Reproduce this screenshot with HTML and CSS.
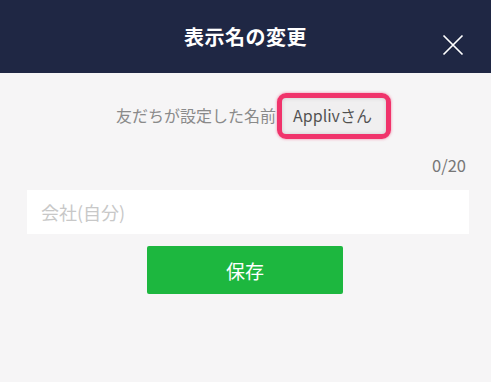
FILE: index.html
```html
<!DOCTYPE html>
<html lang="ja">
<head>
  <meta charset="UTF-8">
  <meta name="viewport" content="width=device-width, initial-scale=1.0">
  <title>表示名の変更</title>
  <link rel="stylesheet" href="styles.css">
</head>
<body>

  <div class="header">
    <div class="title">表示名の変更</div>
    <div class="close">
      <svg width="22" height="22" viewBox="0 0 22 22">
        <path d="M1.5 1.5 L20.5 20.5 M20.5 1.5 L1.5 20.5" stroke="#fff" stroke-width="1.7" fill="none"/>
      </svg>
    </div>
  </div>

  <div class="content">
    <div class="friend-name">友だちが設定した名前<span class="name">Applivさん</span></div>
    <div class="counter">0/20</div>
    <div class="input">会社(自分)</div>
    <button class="save">保存</button>
  </div>

</body>
</html>
```

FILE: styles.css
```css
body {
  margin: 0;
  background-color: #f6f5f6;
  font-family: "Noto Sans CJK JP", "Noto Sans", sans-serif;
}

.header {
  position: relative;
  height: 73px;
  background-color: #1f2744;
  display: flex;
  align-items: center;
  justify-content: center;
}

.title {
  color: #fff;
  font-size: 20px;
  font-weight: bold;
  letter-spacing: 0.5px;
}

.close {
  position: absolute;
  right: 27px;
  top: 34px;
  width: 22px;
  height: 22px;
}

.content {
  padding: 0 22px 0 27px;
}

.friend-name {
  margin-top: 30px;
  text-align: center;
  color: #8a8a8a;
  font-size: 16px;
  line-height: 24px;
  padding-right: 8px;
}

.name {
  position: relative;
  color: #000;
  margin-left: 17px;
}

.name::after {
  content: "";
  position: absolute;
  left: -16px;
  right: -19px;
  top: -10px;
  bottom: -12px;
  border: 5px solid #f0336b;
  border-radius: 9px;
  background: rgba(230, 230, 230, 0.35);
  box-shadow: 0 0 3px rgba(240, 51, 107, 0.6), inset 0 0 4px rgba(0, 0, 0, 0.15);
}

.counter {
  margin-top: 29px;
  text-align: right;
  color: #777;
  font-size: 16.5px;
  line-height: 18px;
  padding-right: 3px;
}

.input {
  margin-top: 16px;
  height: 44px;
  background-color: #fff;
  color: #c8c8c8;
  font-size: 18px;
  line-height: 44px;
  padding-left: 14px;
  box-sizing: border-box;
}

.save {
  display: block;
  margin: 12px 0 0 120px;
  width: 196px;
  height: 48px;
  border: none;
  border-radius: 2px;
  background-color: #1db73f;
  color: #fff;
  font-family: "Noto Sans CJK JP", sans-serif;
  font-size: 19px;
}
```
